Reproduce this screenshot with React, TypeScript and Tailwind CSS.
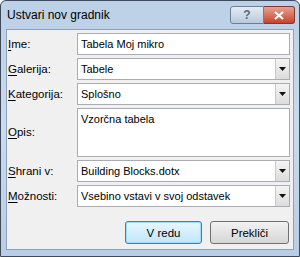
import React from "react";

const Label = ({ k, rest }: { k: string; rest: string }) => (
  <div className="w-[69px] text-[11.5px] leading-[15px] text-black">
    <span className="underline underline-offset-2">{k}</span>
    {rest}
  </div>
);

const Arrow = () => (
  <div className="w-[14px] h-[20px] flex items-center justify-center bg-gradient-to-b from-[#f4f4f4] to-[#dcdcdc] border-l border-[#c8c8c8]">
    <svg width="7" height="4" viewBox="0 0 7 4">
      <path d="M0 0h7L3.5 4z" fill="#111" />
    </svg>
  </div>
);

const Row = ({ k, rest, value, combo, h = "h-[22px]" }: { k: string; rest: string; value: string; combo?: boolean; h?: string }) => (
  <div className="flex items-center">
    <Label k={k} rest={rest} />
    <div className={`flex-1 ${h} flex border border-[#a9acb2] bg-white`}>
      <div className={`flex-1 px-[3px] text-[11px] leading-[15px] text-black ${combo ? "flex items-center" : "pt-[3px]"}`}>{value}</div>
      {combo && <Arrow />}
    </div>
  </div>
);

export default function App() {
  return (
    <div className="w-[300px] h-[257px] bg-white text-[12px] leading-[16px]" style={{ fontFamily: '"Liberation Sans", Arial, sans-serif' }}>
      <div className="w-[300px] h-[257px] border border-[#3c4a5c] rounded-t-[6px] bg-gradient-to-b from-[#bcd0e6] via-[#c9dbee] to-[#b9cde4] flex flex-col px-[5px] pb-[6px]">
        <div className="h-[28px] flex items-center justify-between">
          <div className="pl-[1px] text-[12px] text-black">Ustvari nov gradnik</div>
          <div className="flex items-center -mr-[1px]">
            <div className="w-[34px] h-[18px] rounded-l-[3px] border border-[#6d7f96] bg-gradient-to-b from-[#e4ecf5] to-[#b8c9dc] flex items-center justify-center text-[#5a6a80] text-[12px] font-bold">?</div>
            <div className="w-[31px] h-[18px] rounded-r-[3px] border border-l-0 border-[#7d3a30] bg-gradient-to-b from-[#e8a192] to-[#c5412b] flex items-center justify-center">
              <svg width="10" height="9" viewBox="0 0 10 9">
                <path d="M1 1l8 7M9 1L1 8" stroke="#fff" strokeWidth="2.2" />
              </svg>
            </div>
          </div>
        </div>
        <div className="flex-1 bg-[#f0f0f0] border border-[#8da2ba] flex flex-col pl-[1px] pr-[3px] pt-[3px]">
          <div className="flex flex-col gap-[3px]">
            <Row k="I" rest="me:" value="Tabela Moj mikro" />
            <Row k="G" rest="alerija:" value="Tabele" combo />
            <Row k="K" rest="ategorija:" value="Splošno" combo />
            <Row k="O" rest="pis:" value="Vzorčna tabela" h="h-[49px]" />
            <Row k="S" rest="hrani v:" value="Building Blocks.dotx" combo />
            <Row k="M" rest="ožnosti:" value="Vsebino vstavi v svoj odstavek" combo />
          </div>
          <div className="flex justify-end gap-[8px] mt-[14px] pr-[1px]">
            <div className="w-[77px] h-[23px] rounded-[3px] border border-[#3c7fb1] shadow-[inset_0_0_0_1px_#9fdcf6] bg-gradient-to-b from-[#eaf6fd] to-[#bee6fd] flex items-center justify-center text-[11.5px] text-black">V redu</div>
            <div className="w-[79px] h-[23px] rounded-[3px] border border-[#707070] bg-gradient-to-b from-[#f2f2f2] to-[#d6d6d6] flex items-center justify-center text-[11.5px] text-black">Prekliči</div>
          </div>
        </div>
      </div>
    </div>
  );
}
